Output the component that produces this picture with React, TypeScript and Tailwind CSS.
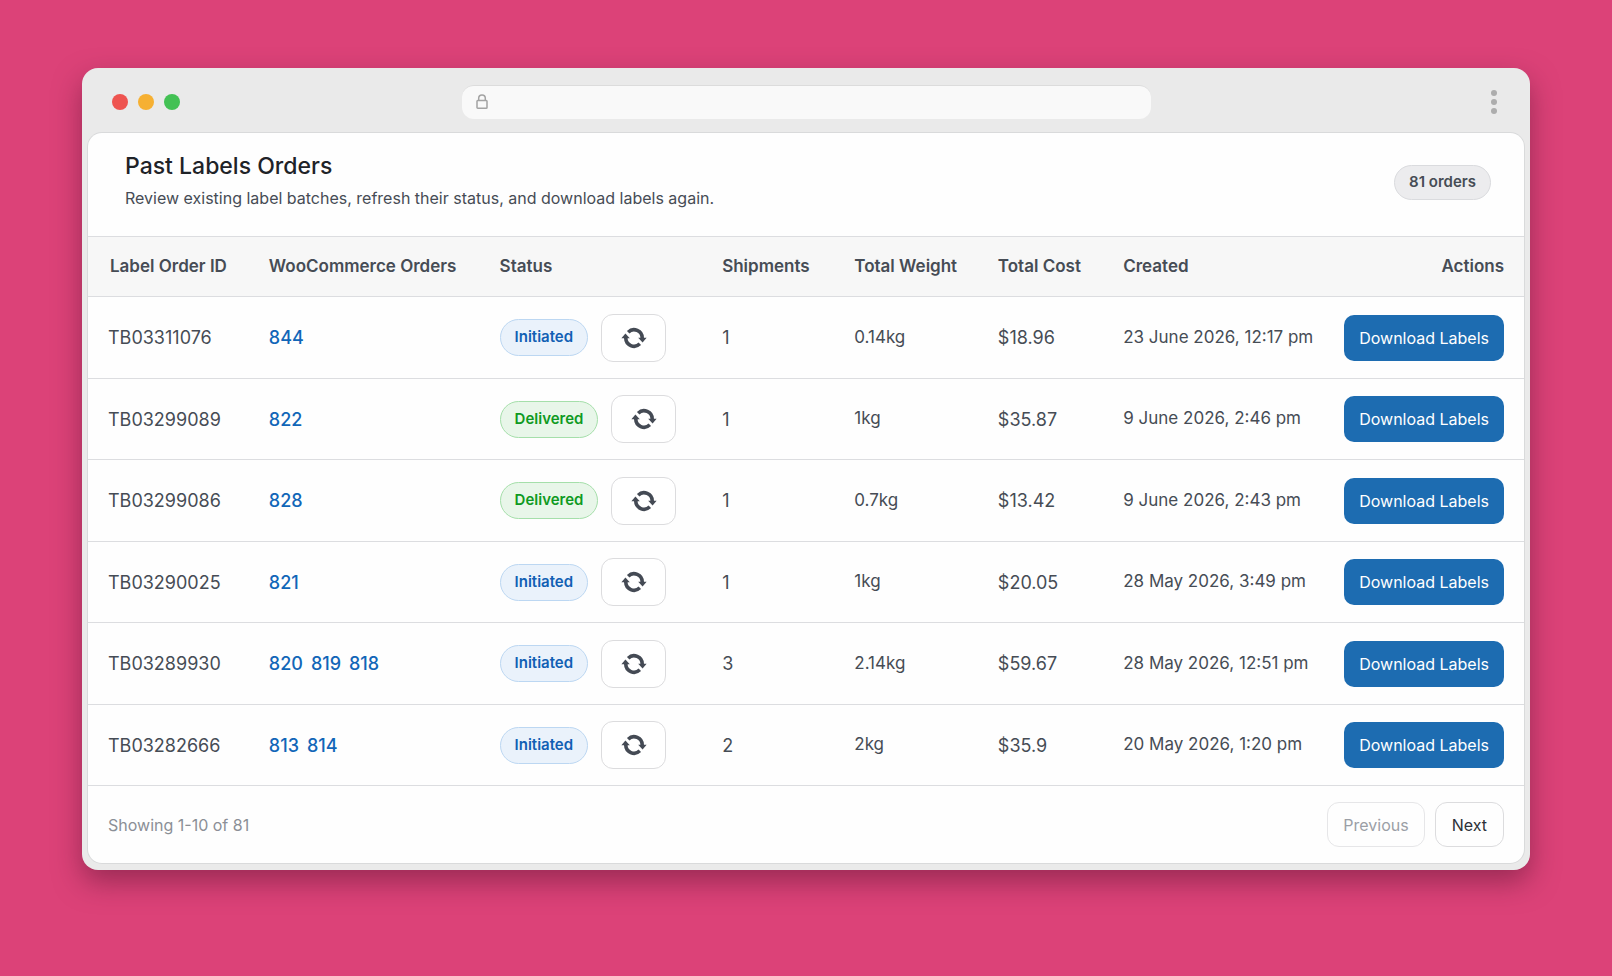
type Status = "Initiated" | "Delivered";

type LabelOrder = {
  id: string;
  orders: string[];
  status: Status;
  shipments: number;
  weight: string;
  cost: string;
  created: string;
};

const labelOrders: LabelOrder[] = [
  { id: "TB03311076", orders: ["844"], status: "Initiated", shipments: 1, weight: "0.14kg", cost: "$18.96", created: "23 June 2026, 12:17 pm" },
  { id: "TB03299089", orders: ["822"], status: "Delivered", shipments: 1, weight: "1kg", cost: "$35.87", created: "9 June 2026, 2:46 pm" },
  { id: "TB03299086", orders: ["828"], status: "Delivered", shipments: 1, weight: "0.7kg", cost: "$13.42", created: "9 June 2026, 2:43 pm" },
  { id: "TB03290025", orders: ["821"], status: "Initiated", shipments: 1, weight: "1kg", cost: "$20.05", created: "28 May 2026, 3:49 pm" },
  { id: "TB03289930", orders: ["820", "819", "818"], status: "Initiated", shipments: 3, weight: "2.14kg", cost: "$59.67", created: "28 May 2026, 12:51 pm" },
  { id: "TB03282666", orders: ["813", "814"], status: "Initiated", shipments: 2, weight: "2kg", cost: "$35.9", created: "20 May 2026, 1:20 pm" },
];

const statusStyles: Record<Status, string> = {
  Initiated: "border-[#bcd7f2] bg-[#eaf2fb] text-[#1160b4]",
  Delivered: "border-[#a5dfaa] bg-[#e8f6e9] text-[#0f9a22]",
};

function RefreshIcon() {
  return (
    <svg viewBox="0 0 26 22" className="h-[22px] w-[26px]" fill="none" aria-hidden="true">
      <path d="M7.2 5.2A8.2 8.2 0 0 1 21.2 11.2" stroke="#444a54" strokeWidth="3.6" />
      <path d="M18.8 16.8A8.2 8.2 0 0 1 4.8 10.8" stroke="#444a54" strokeWidth="3.6" />
      <path d="M17.2 10.8H25.6L21.6 15.4Z" fill="#444a54" />
      <path d="M8.8 11.2H0.4L4.4 6.6Z" fill="#444a54" />
    </svg>
  );
}

function LockIcon() {
  return (
    <svg viewBox="0 0 12 16" className="h-4 w-3" fill="none" stroke="#a3a3a3" strokeWidth="1.5" aria-hidden="true">
      <rect x="1" y="6.5" width="10" height="7.8" rx="0.8" />
      <path d="M2.7 6.5V4.2a3.3 3.3 0 0 1 6.6 0v2.3" />
    </svg>
  );
}

function BrowserBar() {
  return (
    <div className="grid h-[65px] grid-cols-[1fr_minmax(0,689px)_1fr] items-center px-6 pt-[2px]">
      <div className="flex gap-[10px]">
        <span className="size-4 rounded-full bg-[#ee5450]" />
        <span className="size-4 rounded-full bg-[#f6b032]" />
        <span className="size-4 rounded-full bg-[#43c154]" />
      </div>
      <label className="flex h-[34px] items-center rounded-xl border-t border-[#dcdcdc] bg-[#f9f9f9] pl-[14px]">
        <LockIcon />
        <input type="text" aria-label="Address" className="h-full min-w-0 flex-1 bg-transparent px-3 text-base text-[#464c55] outline-none" />
      </label>
      <button type="button" aria-label="Browser menu" className="flex w-3 flex-col items-center gap-[3px] justify-self-end">
        <span className="size-[6px] rounded-full bg-[#adadad]" />
        <span className="size-[6px] rounded-full bg-[#adadad]" />
        <span className="size-[6px] rounded-full bg-[#adadad]" />
      </button>
    </div>
  );
}

function OrderRow({ order }: { order: LabelOrder }) {
  return (
    <tr className="border-b border-[#dcdde0] odd:h-[82px] even:h-[81px]">
      <td className="pl-5">{order.id}</td>
      <td className="pl-5">
        <div className="flex gap-2">
          {order.orders.map((n) => (
            <a key={n} href={`#order-${n}`} className="font-medium text-[#1166b8]">
              {n}
            </a>
          ))}
        </div>
      </td>
      <td className="pl-[21px]">
        <div className="flex items-center gap-[13px]">
          <span className={`flex h-[37px] items-center rounded-full border px-[14px] text-[15px] font-semibold ${statusStyles[order.status]}`}>
            {order.status}
          </span>
          <button
            type="button"
            aria-label={`Refresh status of ${order.id}`}
            className="flex h-12 w-[65px] items-center justify-center rounded-xl border border-[#dcdcde] bg-white"
          >
            <RefreshIcon />
          </button>
        </div>
      </td>
      <td className="pl-[21px]">{order.shipments}</td>
      <td className="pl-[21px] text-[17px]">{order.weight}</td>
      <td className="pl-[21px]">{order.cost}</td>
      <td className="pl-5 text-[17px]">{order.created}</td>
      <td className="pr-5 text-right">
        <button type="button" className="h-[46px] rounded-[10px] bg-[#1d6cb1] px-[15px] text-[16px] text-white">
          Download Labels
        </button>
      </td>
    </tr>
  );
}

export default function App() {
  return (
    <main className="min-h-screen bg-[#dc4278] px-[82px] pt-[68px] pb-[105px] font-['Inter','Liberation_Sans',sans-serif] text-[#464c55]">
      <div className="rounded-[16px] bg-[#eaeaea] px-[6px] pb-[7px] shadow-[0_12px_28px_rgba(90,20,50,0.5)]">
        <BrowserBar />
        <section className="overflow-hidden rounded-[14px] bg-[#fefefe] shadow-[0_0_0_1px_#d9dadb]">
          <header className="flex h-[103px] items-start justify-between pt-[17px] pr-[33px] pl-[37px]">
            <div>
              <h1 className="text-[23px] leading-8 font-medium text-[#1f2328]">Past Labels Orders</h1>
              <p className="text-[16px] leading-8">Review existing label batches, refresh their status, and download labels again.</p>
            </div>
            <span className="mt-[15px] flex h-[35px] items-center rounded-full border border-[#dadbde] bg-[#ececee] px-[14px] text-[15px] font-semibold">
              81 orders
            </span>
          </header>
          <table className="w-full table-fixed border-collapse text-left text-[18px] whitespace-nowrap">
            <colgroup>
              <col className="w-[11.2%]" />
              <col className="w-[16%]" />
              <col className="w-[15.5%]" />
              <col className="w-[9.2%]" />
              <col className="w-[10%]" />
              <col className="w-[8.8%]" />
              <col className="w-[15.3%]" />
              <col className="w-[14%]" />
            </colgroup>
            <thead className="bg-[#f7f7f7] text-[17px]">
              <tr className="h-[60px] border-y border-[#dcdde0]">
                <th scope="col" className="pl-[22px] font-semibold">Label Order ID</th>
                <th scope="col" className="pl-5 font-semibold">WooCommerce Orders</th>
                <th scope="col" className="pl-[21px] font-semibold">Status</th>
                <th scope="col" className="pl-[21px] font-semibold">Shipments</th>
                <th scope="col" className="pl-[21px] font-semibold">Total Weight</th>
                <th scope="col" className="pl-[21px] font-semibold">Total Cost</th>
                <th scope="col" className="pl-5 font-semibold">Created</th>
                <th scope="col" className="pr-5 text-right font-semibold">Actions</th>
              </tr>
            </thead>
            <tbody>
              {labelOrders.map((order) => (
                <OrderRow key={order.id} order={order} />
              ))}
            </tbody>
          </table>
          <footer className="flex h-[77px] items-center justify-between px-5">
            <p className="text-[16px] text-[#8b8f96]">Showing 1-10 of 81</p>
            <nav aria-label="Pagination" className="flex gap-[10px] text-[16px]">
              <button type="button" disabled className="h-[45px] rounded-xl border border-[#e6e6e8] px-[15px] text-[#9b9fa6]">
                Previous
              </button>
              <button type="button" className="h-[45px] rounded-xl border border-[#dcdcde] px-4 text-[#2c3138]">
                Next
              </button>
            </nav>
          </footer>
        </section>
      </div>
    </main>
  );
}
